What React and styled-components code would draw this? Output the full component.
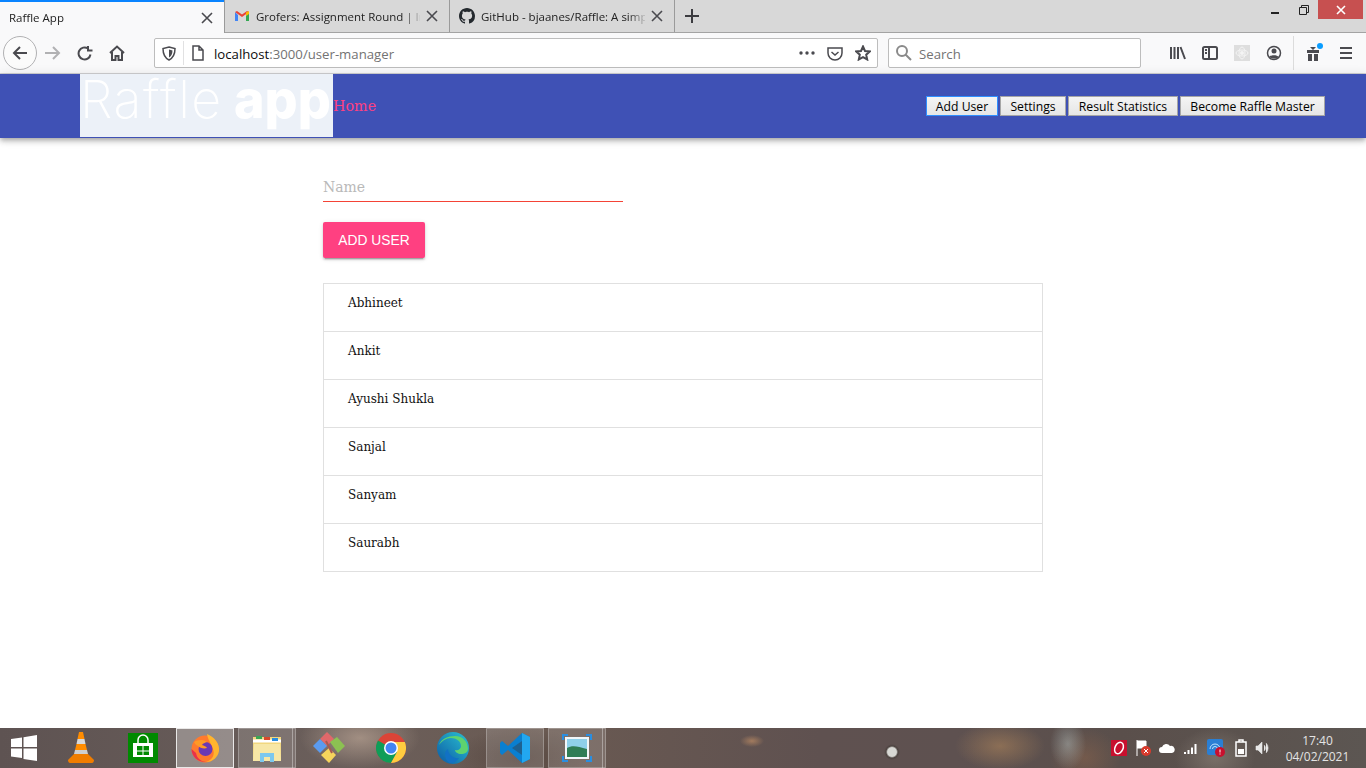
import React from "react";
import styled, { createGlobalStyle } from "styled-components";

const users = ["Abhineet", "Ankit", "Ayushi Shukla", "Sanjal", "Sanyam", "Saurabh"];
const navLinks = [
  { label: "Add User", width: 72 },
  { label: "Settings", width: 66 },
  { label: "Result Statistics", width: 110 },
  { label: "Become Raffle Master", width: 145 },
];

const Global = createGlobalStyle`
  html, body { margin: 0; padding: 0; background: #fff; }
  * { box-sizing: border-box; }
`;

const Page = styled.div`
  width: 1366px;
  height: 768px;
  display: flex;
  flex-direction: column;
  overflow: hidden;
  font-family: "Liberation Sans", sans-serif;
`;

/* ---------- browser chrome ---------- */
const TabStrip = styled.div`
  height: 33px;
  flex: none;
  display: flex;
  background: #d8d8d8;
  border-bottom: 1px solid #a3a3a3;
`;

const Tab = styled.div`
  width: ${(p) => (p.$active ? "224px" : "225px")};
  height: ${(p) => (p.$active ? "33px" : "32px")};
  display: flex;
  align-items: center;
  padding: 0 11px 0 9px;
  gap: 6px;
  font: 11.5px "Open Sans", sans-serif;
  color: #222;
  background: ${(p) => (p.$active ? "#f9f9fa" : "transparent")};
  border-top: ${(p) => (p.$active ? "2px solid #0a84ff" : "0")};
  border-right: ${(p) => (p.$active ? "0" : "1px solid #9a9a9a")};
  ${(p) => p.$active && "margin-right: 1px; box-shadow: 1px 0 0 #9a9a9a;"}
`;

const TabTitle = styled.span`
  flex: 1;
  white-space: nowrap;
  overflow: hidden;
  -webkit-mask-image: linear-gradient(to right, #000 90%, rgba(0,0,0,.15));
  mask-image: linear-gradient(to right, #000 90%, rgba(0,0,0,.15));
`;

const NewTab = styled.div`
  width: 33px;
  display: flex;
  align-items: center;
  justify-content: center;
`;

const WindowButtons = styled.div`
  margin-left: auto;
  display: flex;
  align-items: flex-start;
  margin-right: 3px;
`;

const WinBtn = styled.div`
  width: ${(p) => (p.$close ? "45px" : "29px")};
  height: 19px;
  display: flex;
  align-items: center;
  justify-content: center;
  background: ${(p) => (p.$close ? "#c75050" : "transparent")};
`;

const Toolbar = styled.div`
  height: 40px;
  flex: none;
  display: flex;
  align-items: center;
  background: #f9f9fa;
  padding-left: 3px;
`;

const BackCircle = styled.div`
  width: 34px;
  height: 34px;
  border-radius: 50%;
  border: 1px solid #b1b1b3;
  background: #fbfbfb;
  display: flex;
  align-items: center;
  justify-content: center;
`;

const ToolIcon = styled.div`
  width: ${(p) => p.$w || 32}px;
  height: 28px;
  display: flex;
  align-items: center;
  justify-content: center;
  flex: none;
`;

const NavIcons = styled.div`
  display: flex;
  margin-right: 21px;
`;

const UrlBar = styled.div`
  width: ${(p) => p.$w}px;
  height: 30px;
  margin-left: ${(p) => p.$ml || 0}px;
  flex: none;
  display: flex;
  align-items: center;
  background: #fff;
  border: 1px solid #bdbdbd;
  border-radius: 2px;
  font: 13.2px "Open Sans", sans-serif;
  color: #737373;
`;

const UrlHost = styled.span`
  color: #0c0c0d;
`;

const UrlSep = styled.div`
  width: 1px;
  height: 24px;
  flex: none;
  background: #e1e1e2;
`;

const UrlText = styled.div`
  flex: 1;
  margin-left: 2px;
  padding-top: 1px;
`;

const SearchText = styled.span`
  padding-top: 1px;
`;

const UrlEnd = styled.div`
  display: flex;
  align-items: center;
  gap: 12px;
  padding-right: 6px;
`;

const ToolbarRight = styled.div`
  display: flex;
  align-items: center;
  margin-left: 21px;
`;

const ToolDivider = styled.div`
  width: 1px;
  height: 34px;
  background: #dcdcdc;
  margin: 0 -3px 0 3px;
`;

const ChromeEdge = styled.div`
  height: 1px;
  flex: none;
  background: #d2d2d4;
`;

/* ---------- app bar ---------- */
const AppBar = styled.header`
  height: 64px;
  flex: none;
  display: flex;
  align-items: center;
  padding: 0 41px 0 80px;
  background: #3f51b5;
  box-shadow: 0 2px 4px -1px rgba(0,0,0,.2), 0 4px 5px 0 rgba(0,0,0,.14), 0 1px 10px 0 rgba(0,0,0,.12);
`;

const Logo = styled.div`
  width: 253px;
  height: 63px;
  margin-bottom: 1px;
  flex: none;
  background: #ecf1f8;
  color: #fff;
  font: 200 52px/52px "Inter", sans-serif;
  letter-spacing: 1.5px;
  white-space: nowrap;
`;

const LogoBold = styled.b`
  font-weight: 800;
  letter-spacing: 0;
  margin-left: -5px;
`;

const HomeLink = styled.a`
  color: #ff4081;
  font: 14.3px "DejaVu Serif", serif;
`;

const NavLinks = styled.nav`
  margin-left: auto;
  margin-top: -1px;
  display: flex;
  gap: 2px;
`;

const NavButton = styled.button`
  height: 20px;
  padding: 1px 0 0;
  width: ${(p) => p.$w}px;
  font: 12.2px "Open Sans", sans-serif;
  color: #000;
  background: linear-gradient(#f4f4f4, #e6e6e6);
  border: 1px solid ${(p) => (p.$focus ? "#2f8fff" : "#a6a6a6")};
`;

/* ---------- content ---------- */
const Main = styled.main`
  flex: 1;
  width: 720px;
  margin: 0 auto;
  padding-top: 34px;
`;

const NameField = styled.div`
  width: 300px;
  height: 30px;
  border-bottom: 1px solid #f44336;
  color: #b9b9b9;
  font: 14px/30px "DejaVu Serif", serif;
`;

const AddButton = styled.button`
  display: block;
  margin-top: 20px;
  width: 102px;
  height: 36px;
  border: 0;
  border-radius: 2px;
  padding: 0;
  background: #ff4081;
  color: #fff;
  font: 13.8px "Liberation Sans", sans-serif;
  box-shadow: 0 3px 1px -2px rgba(0,0,0,.2), 0 2px 2px 0 rgba(0,0,0,.14), 0 1px 5px 0 rgba(0,0,0,.12);
`;

const UserList = styled.ul`
  list-style: none;
  margin: 25px 0 0;
  padding: 0;
  border: 1px solid #e0e0e0;
  border-bottom: 0;
`;

const UserRow = styled.li`
  height: 48px;
  padding: 10px 24px 0;
  border-bottom: 1px solid #e0e0e0;
  font: 12px/18px "DejaVu Serif", serif;
  color: #111;
`;

/* ---------- taskbar ---------- */
const Taskbar = styled.footer`
  height: 40px;
  flex: none;
  display: flex;
  align-items: center;
  gap: 4px;
  color: #eee;
  background:
    radial-gradient(circle 8px at 892px 24px, #d8d8d4 55%, rgba(60,55,50,.5) 75%, transparent),
    radial-gradient(ellipse 12px 6px at 752px 13px, rgba(190,140,100,.7), transparent),
    radial-gradient(ellipse 45px 24px at 1000px 18px, rgba(170,130,90,.6), transparent),
    radial-gradient(ellipse 18px 26px at 1068px 16px, rgba(180,195,195,.45), transparent),
    radial-gradient(ellipse 35px 30px at 1085px 30px, rgba(140,100,75,.5), transparent),
    radial-gradient(ellipse 60px 30px at 360px 10px, rgba(215,190,170,.5), transparent),
    radial-gradient(ellipse 70px 30px at 520px 30px, rgba(60,45,40,.4), transparent),
    radial-gradient(ellipse 40px 30px at 1215px 30px, rgba(140,130,120,.6), transparent),
    linear-gradient(90deg, #5e5352 0%, #6b5f5b 25%, #6a5a52 40%, #5f5150 60%, #5e5150 70%, #5a4f4b 82%, #5c5652 100%);
`;

const TaskSlot = styled.div`
  position: relative;
  width: ${(p) => p.$w || 58}px;
  height: 40px;
  flex: none;
  display: flex;
  align-items: center;
  justify-content: center;
  ${(p) => p.$open && "background: rgba(255,255,255,.14); box-shadow: inset 0 0 0 1px rgba(255,255,255,.25);"}
  ${(p) => p.$current && "background: rgba(255,255,255,.3); box-shadow: inset 0 0 0 1px rgba(255,255,255,.8);"}
  ${(p) => p.$stack && `
    &::after {
      content: "";
      position: absolute;
      top: 0;
      bottom: 0;
      right: 3px;
      width: 1px;
      background: rgba(255,255,255,.35);
    }
  `}
`;

const Tray = styled.div`
  margin-left: auto;
  display: flex;
  align-items: center;
  margin-right: 10px;
`;

const TrayIcon = styled.div`
  width: ${(p) => p.$w}px;
  display: flex;
  align-items: center;
  justify-content: center;
`;

const Clock = styled.div`
  width: 77px;
  margin: 1px 0 0 5px;
  font: 12px/16px "Open Sans", sans-serif;
  text-align: center;
  color: #e4e4e4;
`;

const stroke = { fill: "none", stroke: "#4a4a4f", strokeWidth: 2 };

const CloseX = () => (
  <svg width="12" height="12" viewBox="0 0 12 12"><path d="M1 1l10 10M11 1L1 11" stroke="#4a4a4f" strokeWidth="1.6" /></svg>
);

const Gmail = () => (
  <svg width="16" height="16" viewBox="0 0 16 16">
    <path d="M1 4v9h3V7z" fill="#4285f4" />
    <path d="M15 4v9h-3V7z" fill="#34a853" />
    <path d="M1 4l7 5 7-5-2-1-5 3.5L3 3z" fill="#ea4335" />
    <path d="M12 4.5L15 3v3l-3 2z" fill="#fbbc04" />
  </svg>
);

const GitHub = () => (
  <svg width="16" height="16" viewBox="0 0 16 16">
    <path fill="#24292e" d="M8 0C3.58 0 0 3.58 0 8c0 3.54 2.29 6.53 5.47 7.59.4.07.55-.17.55-.38 0-.19-.01-.82-.01-1.49-2.01.37-2.53-.49-2.69-.94-.09-.23-.48-.94-.82-1.13-.28-.15-.68-.52-.01-.53.63-.01 1.08.58 1.23.82.72 1.21 1.87.87 2.33.66.07-.52.28-.87.51-1.07-1.78-.2-3.64-.89-3.64-3.95 0-.87.31-1.59.82-2.15-.08-.2-.36-1.02.08-2.12 0 0 .67-.21 2.2.82.64-.18 1.32-.27 2-.27s1.36.09 2 .27c1.53-1.04 2.2-.82 2.2-.82.44 1.1.16 1.92.08 2.12.51.56.82 1.27.82 2.15 0 3.07-1.87 3.75-3.65 3.95.29.25.54.73.54 1.48 0 1.07-.01 1.93-.01 2.2 0 .21.15.46.55.38A8.01 8.01 0 0016 8c0-4.42-3.58-8-8-8z" />
  </svg>
);

const Glyph = ({ w = 16, h = 16, children }) => (
  <svg width={w} height={h} viewBox={`0 0 ${w} ${h}`}>{children}</svg>
);

const Firefox = () => (
  <svg width="30" height="30" viewBox="0 0 30 30">
    <circle cx="15" cy="16" r="13.500" fill="#ff7a2e" />
    <path d="M17 1c7 3 13 9 12 17-1 6-6 11-13 11 7-2 9-8 7-13-1-5-5-8-6-15z" fill="#ffb52e" />
    <path d="M1.500 16c0 8 7 13.500 14.500 13-6-1-9-4-10-9z" fill="#e8324a" />
    <circle cx="15.500" cy="16" r="7" fill="#6b39b5" />
    <path d="M4 9c3-2 9-3 13 0-2 1-4 1-5 3 2 1 4 1 5 3-3 1-7 0-9-2-2-1-3-2-4-4z" fill="#ff9a26" />
  </svg>
);

const Vlc = () => (
  <svg width="28" height="34" viewBox="0 0 28 34">
    <path d="M12 1h4l1.500 7h-7z" fill="#ff8c00" />
    <path d="M10.500 8h7l1 5h-9z" fill="#d8d8d8" />
    <path d="M9.500 13h9l1.500 6H8z" fill="#ff8c00" />
    <path d="M8 19h12l1 4H7z" fill="#cfcfcf" />
    <path d="M7 23h14l6 6c0 2-1 3-2 3H3c-1 0-2-1-2-3z" fill="#f07d00" />
  </svg>
);

const Store = () => (
  <svg width="30" height="30" viewBox="0 0 30 30">
    <rect width="30" height="30" fill="#008a00" />
    <path d="M10 10V7a5 5 0 0110 0v3" fill="none" stroke="#fff" strokeWidth="1.500" />
    <path d="M5 10h20v14H5z" fill="#fff" />
    <path d="M9 13h5.500v4.500H9zM15.500 13H21v4.500h-5.500zM9 18.500h5.500V22H9zM15.500 18.500H21V22h-5.500z" fill="#008a00" />
  </svg>
);

const Folder = () => (
  <svg width="32" height="32" viewBox="0 0 32 32">
    <path d="M2 5h28v24H2z" fill="#f1d77f" />
    <path d="M2 9h28" stroke="#fff" strokeWidth="3" />
    <path d="M5 4h6v3H5z" fill="#3aa655" />
    <path d="M13 5h6v3h-6z" fill="#d9482b" />
    <path d="M21 6h6v3h-6z" fill="#2a8ee0" />
    <path d="M3 12h26l1 17H2z" fill="#f7e7a6" />
    <path d="M9 30v-9h14v9h-4v-5h-6v5z" fill="#7cc8ee" />
  </svg>
);

const Paint = () => (
  <svg width="34" height="34" viewBox="0 0 34 34">
    <path d="M15 1l7 7-7 7-7-7z" fill="#e0686a" />
    <path d="M1 15l7-7 7 7-7 7z" fill="#5b9bef" />
    <path d="M18 11l7-5 8 9-7 7z" fill="#8cc152" />
    <path d="M17 17l7 7-7 8-8-8z" fill="#f6d55c" />
    <path d="M14 10l6 12" stroke="#a85a50" strokeWidth="2" />
  </svg>
);

const Chrome = () => (
  <svg width="30" height="30" viewBox="0 0 30 30">
    <circle cx="15" cy="15" r="15" fill="#db4437" />
    <path d="M15 15L2 7.500A15 15 0 0015 30l6.500-11z" fill="#0f9d58" />
    <path d="M15 9h13.800A15 15 0 0115 30l6-11z" fill="#ffcd40" />
    <circle cx="15" cy="15" r="7" fill="#fff" />
    <circle cx="15" cy="15" r="5.500" fill="#4285f4" />
  </svg>
);

const Edge = () => (
  <svg width="32" height="32" viewBox="0 0 32 32">
    <defs>
      <linearGradient id="edgeA" x1="0" y1="1" x2="1" y2="0">
        <stop offset="0" stopColor="#0c59a4" />
        <stop offset="1" stopColor="#2bc3d2" />
      </linearGradient>
    </defs>
    <circle cx="16" cy="16" r="16" fill="url(#edgeA)" />
    <path d="M18 4c8 0 13 6 13 13 0 3-3 5-7 5-3 0-6-2-6-4 3 1 6-1 6-4 0-5-5-8-10-8-5 0-9 3-12 7C4 7 11 4 18 4z" fill="#5ed36f" />
    <path d="M11 17c0 5 5 10 11 9-2 3-5 5-9 5-3-1-5-5-5-9 0-2 1-4 3-5z" fill="#1271c4" />
  </svg>
);

const VsCode = () => (
  <svg width="32" height="32" viewBox="0 0 32 32">
    <path d="M23 1l8 4v22l-8 4-14-13-6 5-2-2V11l2-2 6 5z" fill="#0a7fd0" />
    <path d="M23 1l8 4v22l-8 4z" fill="#22a7f0" />
    <path d="M23 9L13 16l10 7z" fill="#3d3532" opacity=".4" />
  </svg>
);

const Photos = () => (
  <svg width="30" height="28" viewBox="0 0 30 28">
    <path d="M0 6V0h6v2H2v4zM24 0h6v6h-2V2h-4zM0 22h2v4h4v2H0zM30 22v6h-6v-2h4v-4z" fill="#2a8ee0" />
    <rect x="3" y="3" width="24" height="22" fill="#f2f6f8" />
    <rect x="5" y="5" width="20" height="18" fill="#8fd0ea" />
    <path d="M5 14c5-3 10-2 20 1v8H5z" fill="#2f7d55" />
  </svg>
);

const App = () => {
  return (
    <Page>
      <Global />
      <TabStrip>
        <Tab $active>
          <TabTitle>Raffle App</TabTitle>
          <CloseX />
        </Tab>
        <Tab>
          <Gmail />
          <TabTitle>Grofers: Assignment Round | In</TabTitle>
          <CloseX />
        </Tab>
        <Tab>
          <GitHub />
          <TabTitle>GitHub - bjaanes/Raffle: A simp</TabTitle>
          <CloseX />
        </Tab>
        <NewTab>
          <Glyph w={14} h={14}><path d="M7 0v14M0 7h14" stroke="#3c3c40" strokeWidth="2" /></Glyph>
        </NewTab>
        <WindowButtons>
          <WinBtn>
            <Glyph w={10} h={10}><path d="M1 8h8" stroke="#222" strokeWidth="2" /></Glyph>
          </WinBtn>
          <WinBtn>
            <Glyph w={10} h={10}><path d="M.5 2.500h7v7h-7zM2.500 2.500v-2h7v7h-2" fill="none" stroke="#222" /></Glyph>
          </WinBtn>
          <WinBtn $close>
            <Glyph w={10} h={10}><path d="M1 1l8 8M9 1L1 9" stroke="#fff" strokeWidth="1.6" /></Glyph>
          </WinBtn>
        </WindowButtons>
      </TabStrip>

      <Toolbar>
        <BackCircle>
          <Glyph w={16} h={16}><path d="M15 8H2M8 2L2 8l6 6" {...stroke} /></Glyph>
        </BackCircle>
        <NavIcons>
          <ToolIcon>
            <Glyph w={16} h={16}><path d="M0 8h14M8 2l6 6-6 6" fill="none" stroke="#b1b1b3" strokeWidth="2" /></Glyph>
          </ToolIcon>
          <ToolIcon>
            <Glyph w={16} h={16}><path d="M13.500 9.500A6 6 0 1111 3.500M11 1v4.500h4.500" {...stroke} /></Glyph>
          </ToolIcon>
          <ToolIcon>
            <Glyph w={16} h={16}><path d="M1 8l7-6.500L15 8M3 7v8h3.500v-4h3v4H13V7" {...stroke} /></Glyph>
          </ToolIcon>
        </NavIcons>
        <UrlBar $w={724}>
          <ToolIcon $w={28}>
            <Glyph w={14} h={15}>
              <path d="M7 1l6 1.500C13 8 11 12 7 14 3 12 1 8 1 2.500z" fill="none" stroke="#4a4a4f" strokeWidth="1.500" />
              <path d="M7 3.500l3.500 1C10.500 8 9 10.500 7 11.500z" fill="#4a4a4f" />
            </Glyph>
          </ToolIcon>
          <UrlSep />
          <ToolIcon $w={28}>
            <Glyph w={14} h={16}><path d="M2 1h6l4 4v10H2zM8 1v4h4" fill="none" stroke="#4a4a4f" strokeWidth="1.500" /></Glyph>
          </ToolIcon>
          <UrlText>
            <UrlHost>localhost</UrlHost>:3000/user-manager
          </UrlText>
          <UrlEnd>
            <Glyph w={16} h={4}>
              <circle cx="2" cy="2" r="1.700" fill="#4a4a4f" />
              <circle cx="8" cy="2" r="1.700" fill="#4a4a4f" />
              <circle cx="14" cy="2" r="1.700" fill="#4a4a4f" />
            </Glyph>
            <Glyph w={16} h={15}><path d="M1 2h14v5a7 7 0 01-14 0zM4.500 6L8 9l3.500-3" fill="none" stroke="#4a4a4f" strokeWidth="1.500" /></Glyph>
            <Glyph w={16} h={16}><path d="M8 1.500l2 4.500 4.800.500-3.600 3.200 1 4.800L8 12.200 3.800 14.500l1-4.800L1.200 6.500 6 6z" {...stroke} /></Glyph>
          </UrlEnd>
        </UrlBar>
        <UrlBar $w={253} $ml={10}>
          <ToolIcon $w={30}>
            <Glyph w={16} h={16}><path d="M10 10l5 5M11 6a5 5 0 11-10 0 5 5 0 0110 0z" fill="none" stroke="#8a8a8a" strokeWidth="2" /></Glyph>
          </ToolIcon>
          <SearchText>Search</SearchText>
        </UrlBar>
        <ToolbarRight>
          <ToolIcon>
            <Glyph w={16} h={14}><path d="M1 1v12M4.500 1v12M8 1v12M10.500 1l4.500 12" {...stroke} /></Glyph>
          </ToolIcon>
          <ToolIcon>
            <Glyph w={16} h={14}><path d="M2.500 1h11A1.500 1.500 0 0115 2.500v9a1.500 1.500 0 01-1.500 1.500h-11A1.500 1.500 0 011 11.500v-9A1.500 1.500 0 012.500 1zM7 1v12M3 4h2M3 7h2" {...stroke} /></Glyph>
          </ToolIcon>
          <ToolIcon>
            <Glyph w={16} h={16}>
              <rect width="16" height="16" fill="#dedede" />
              <circle cx="8" cy="8" r="2" fill="#f4f4f4" />
              <ellipse cx="8" cy="8" rx="6" ry="3" fill="none" stroke="#f4f4f4" />
              <ellipse cx="8" cy="8" rx="3" ry="6" fill="none" stroke="#f4f4f4" />
            </Glyph>
          </ToolIcon>
          <ToolIcon>
            <Glyph w={16} h={16}>
              <circle cx="8" cy="8" r="6.500" fill="none" stroke="#4a4a4f" strokeWidth="1.500" />
              <circle cx="8" cy="6" r="2.500" fill="#4a4a4f" />
              <path d="M3.500 12c1-2.500 8-2.500 9 0-2 2-7 2-9 0z" fill="#4a4a4f" />
            </Glyph>
          </ToolIcon>
          <ToolDivider />
          <ToolIcon $w={46}>
            <Glyph w={18} h={20}>
              <circle cx="15" cy="3" r="3" fill="#0a9dff" />
              <path d="M2 7h12v3H2zM3 11h4v7H3zM9 11h4v7H9zM5 4l3 3 3-3" fill="#4a4a4f" />
            </Glyph>
          </ToolIcon>
          <ToolIcon $w={18}>
            <Glyph w={14} h={14}><path d="M1 2h12M1 7h12M1 12h12" {...stroke} /></Glyph>
          </ToolIcon>
        </ToolbarRight>
      </Toolbar>
      <ChromeEdge />

      <AppBar>
        <Logo>Raffle <LogoBold>app</LogoBold></Logo>
        <HomeLink>Home</HomeLink>
        <NavLinks>
          {navLinks.map((link, i) => (
            <NavButton key={link.label} $focus={i === 0} $w={link.width}>{link.label}</NavButton>
          ))}
        </NavLinks>
      </AppBar>

      <Main>
        <NameField>Name</NameField>
        <AddButton>ADD USER</AddButton>
        <UserList>
          {users.map((user) => (
            <UserRow key={user}>{user}</UserRow>
          ))}
        </UserList>
      </Main>

      <Taskbar>
        <TaskSlot $w={48}>
          <Glyph w={26} h={26}><path d="M0 4l11-1.500V12H0zM12.500 2.300L26 0v12H12.500zM0 13.500h11V23L0 21.500zM12.500 13.500H26V26l-13.500-2z" fill="#fff" /></Glyph>
        </TaskSlot>
        <TaskSlot><Vlc /></TaskSlot>
        <TaskSlot><Store /></TaskSlot>
        <TaskSlot $current><Firefox /></TaskSlot>
        <TaskSlot $open $stack><Folder /></TaskSlot>
        <TaskSlot><Paint /></TaskSlot>
        <TaskSlot><Chrome /></TaskSlot>
        <TaskSlot><Edge /></TaskSlot>
        <TaskSlot $open><VsCode /></TaskSlot>
        <TaskSlot $open $stack><Photos /></TaskSlot>
        <Tray>
          <TrayIcon $w={25}>
            <Glyph w={16} h={16}>
              <rect width="16" height="16" fill="#c8102e" />
              <ellipse cx="8" cy="8" rx="4" ry="6" fill="none" stroke="#fff" strokeWidth="1.500" transform="rotate(25 8 8)" />
            </Glyph>
          </TrayIcon>
          <TrayIcon $w={24}>
            <Glyph w={16} h={18}>
              <path d="M2 1v16M2 2h9v7H2" fill="#fff" stroke="#fff" />
              <circle cx="11" cy="12" r="5" fill="#d83b2d" />
              <path d="M9 10l4 4M13 10l-4 4" stroke="#fff" />
            </Glyph>
          </TrayIcon>
          <TrayIcon $w={23}>
            <Glyph w={16} h={12}><path d="M3 11a3 3 0 010-6 4.500 4.500 0 018-1 3.500 3.500 0 012 7z" fill="#fff" /></Glyph>
          </TrayIcon>
          <TrayIcon $w={25}>
            <Glyph w={16} h={12}><path d="M1 10h2v2H1zM4.500 8h2v4h-2zM8 5.500h2V12H8zM11.500 2h2v10h-2z" fill="#fff" /></Glyph>
          </TrayIcon>
          <TrayIcon $w={26}>
            <Glyph w={18} h={18}>
              <rect width="16" height="16" rx="2" fill="#2a7fd4" />
              <path d="M3 10a5 5 0 0110 0M5.500 10a2.500 2.500 0 015 0" fill="none" stroke="#bfe3ff" />
              <circle cx="13" cy="13" r="5" fill="#c8102e" />
              <path d="M13 10.500v3M13 14.500v1" stroke="#fff" />
            </Glyph>
          </TrayIcon>
          <TrayIcon $w={23}>
            <Glyph w={14} h={18}>
              <path d="M2 3h10v14H2zM5 1h4v2H5z" fill="none" stroke="#fff" strokeWidth="1.500" />
              <path d="M4 10h6v5H4z" fill="#fff" />
            </Glyph>
          </TrayIcon>
          <TrayIcon $w={22}>
            <Glyph w={16} h={14}><path d="M1 5h2l4-4v12L3 9H1zM9 4a4 4 0 010 6M11 2a7 7 0 010 10" fill="#e8e8e8" stroke="#e8e8e8" strokeWidth=".6" /></Glyph>
          </TrayIcon>
          <Clock>17:40<br />04/02/2021</Clock>
        </Tray>
      </Taskbar>
    </Page>
  );
};

export default App;
